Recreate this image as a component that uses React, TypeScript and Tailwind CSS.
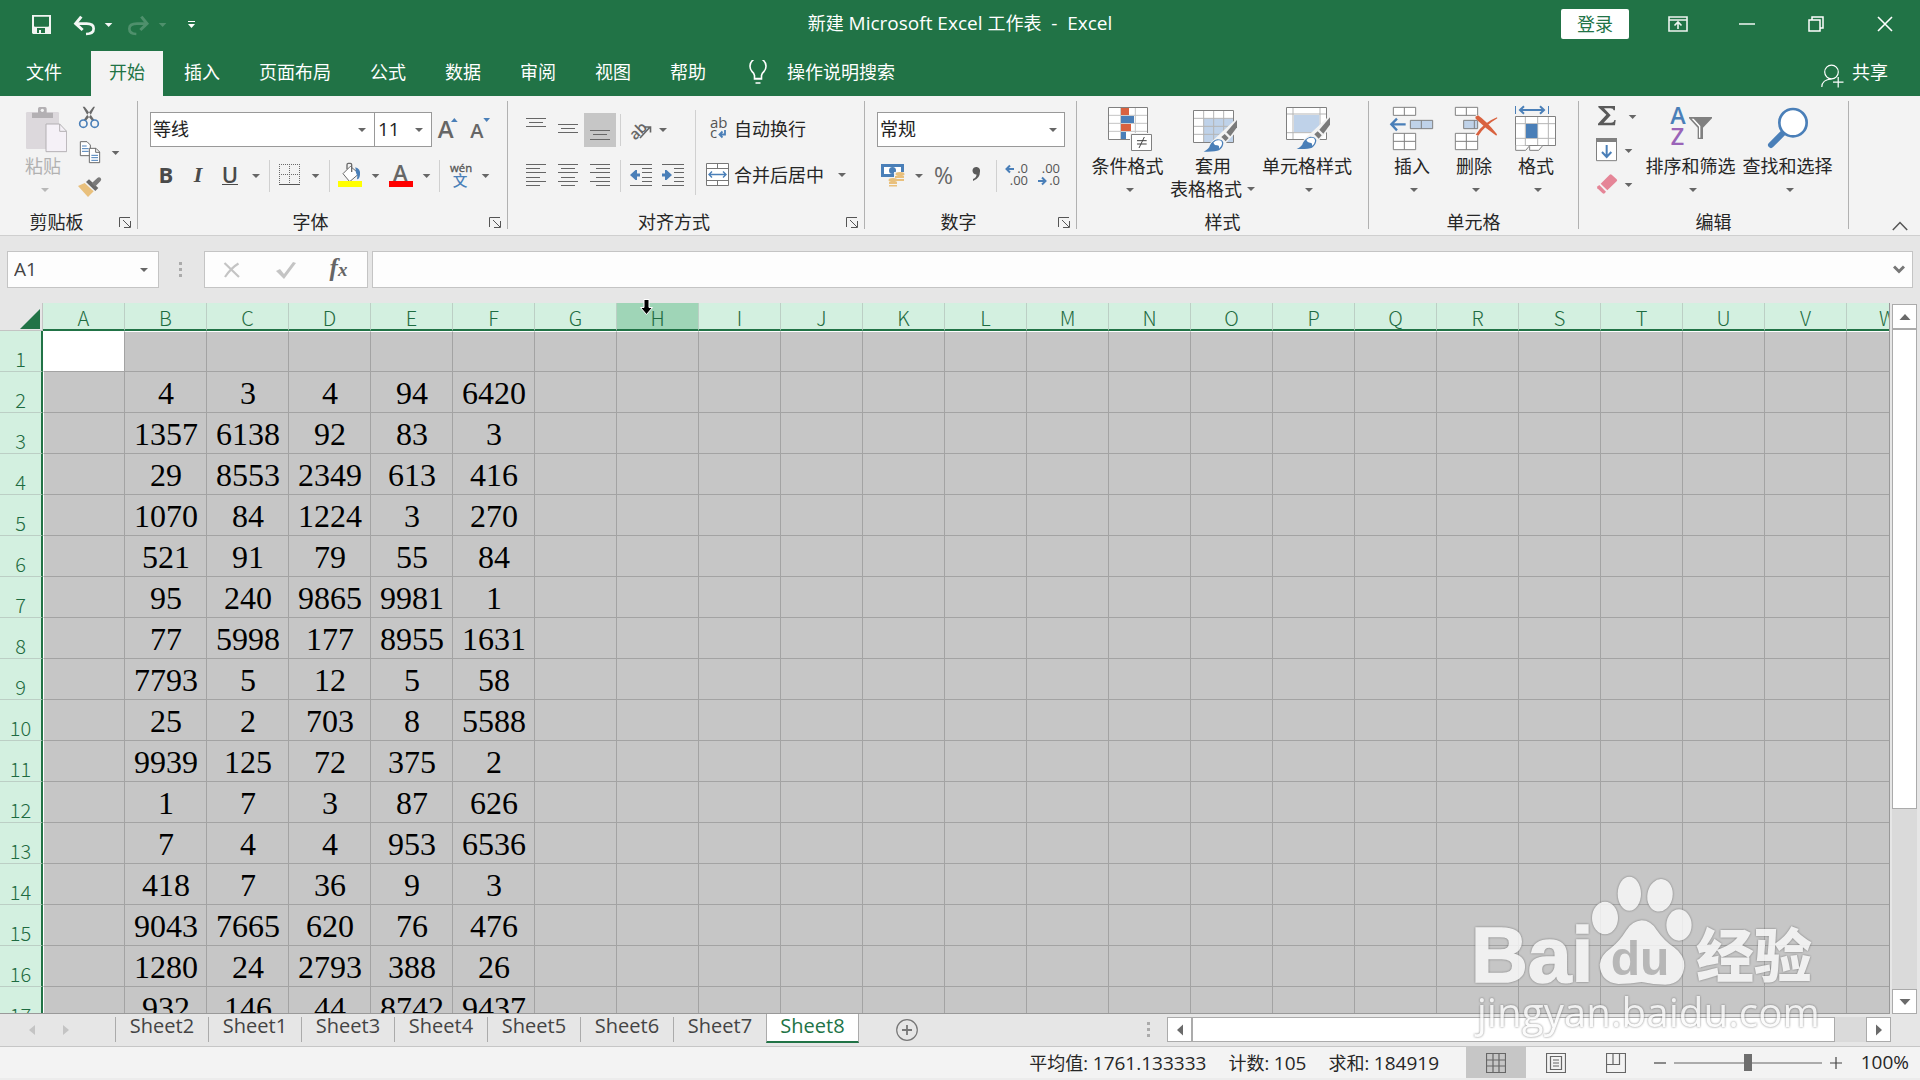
import React from "react";

type Kids = { children?: React.ReactNode };

const UNITS = 3;

/* Icon whose drawing units are a third of a pixel. */
function Fine({ x, y, w, h, children }: { x: number; y: number; w: number; h: number } & Kids) {
  return (
    <svg width={w} height={h} viewBox={`${x} ${y} ${w * UNITS} ${h * UNITS}`} className="block shrink-0" aria-hidden="true">
      {children}
    </svg>
  );
}

function Pix({ x, y, w, h, children }: { x: number; y: number; w: number; h: number } & Kids) {
  return (
    <svg width={w} height={h} viewBox={`${x} ${y} ${w} ${h}`} className="block shrink-0" aria-hidden="true">
      {children}
    </svg>
  );
}

function Caret({ color = "#666" }: { color?: string }) {
  return (
    <svg width="8" height="4" viewBox="0 0 8 4" className="block shrink-0" aria-hidden="true">
      <path d="M0 0h8L4 4z" fill={color} />
    </svg>
  );
}

function IconButton({ label, className = "", children }: { label: string; className?: string } & Kids) {
  return (
    <button type="button" aria-label={label} className={`flex shrink-0 items-center justify-center ${className}`}>
      {children}
    </button>
  );
}

function Sep() {
  return <div className="h-8 w-px shrink-0 bg-[#d0d0d0]" />;
}

function Group({ label, launcher, className, children }: { label: string; launcher?: boolean; className: string } & Kids) {
  return (
    <section aria-label={label} className={`flex h-32 shrink-0 flex-col border-r border-[#b1b1b1] ${className}`}>
      <div className="flex h-[114px]">{children}</div>
      <div className="flex h-[14px] items-center">
        <div className="flex-1 text-center leading-[14px]">{label}</div>
        {launcher && (
          <IconButton label={`${label}设置`} className="w-6">
            <Pix x={0} y={0} w={12} h={12}>
              <path d="M.5 11V1.500H11M4 4l7 7M11.500 5v6.500H5" fill="none" stroke="#555" />
            </Pix>
          </IconButton>
        )}
      </div>
    </section>
  );
}

function BigButton({ icon, lines, disabled, inlineCaret, className }: { icon: React.ReactNode; lines: string[]; disabled?: boolean; inlineCaret?: boolean; className: string }) {
  return (
    <button type="button" disabled={disabled} className={`flex shrink-0 flex-col items-center pt-1 whitespace-nowrap ${disabled ? "text-[#b1b1b1]" : ""} ${className}`}>
      {icon}
      <span className="mt-px leading-6">{lines[0]}</span>
      {inlineCaret ? (
        <span className="flex items-center gap-[5px] self-start leading-[22px]">
          {lines[1]}
          <Caret />
        </span>
      ) : (
        <span className="mt-[10px] ml-1">
          <Caret color={disabled ? "#b8b8b8" : "#666"} />
        </span>
      )}
    </button>
  );
}

/* ---------- title bar ---------- */

function TitleBar() {
  return (
    <header className="flex h-[51px] items-start">
      <div className="flex h-12 flex-1 items-center">
        <IconButton label="保存" className="ml-6 w-9">
          <Fine x={90} y={36} w={24} h={24}>
            <path fillRule="evenodd" fill="#f1f5f2" d="M96 45h57v57H99l-3-3zM102 50v27q0 3 3 3h39q3 0 3-3V50zM111 84v15h6v-9h6v9h12V84z" />
          </Fine>
        </IconButton>
        <IconButton label="撤消" className="ml-[7px] w-[52px]">
          <Fine x={210} y={33} w={46} h={27}>
            <path d="M230 71H260Q281 71 281 86Q281 101 258 102" fill="none" stroke="#f4f7f5" strokeWidth="8" />
            <path d="M244 50L227 71L248 90" fill="none" stroke="#f4f7f5" strokeWidth="9" />
            <path d="M314 69h23l-11 12z" fill="#f4f7f5" />
          </Fine>
        </IconButton>
        <IconButton label="恢复" className="w-[54px]">
          <Fine x={363} y={33} w={48} h={27}>
            <path d="M434 71H408Q385 71 385 86Q385 101 406 102" fill="none" stroke="#4f906c" strokeWidth="8" />
            <path d="M421 50L438 71L418 90" fill="none" stroke="#4f906c" strokeWidth="9" />
            <path d="M473 69h23l-11 12z" fill="#4f906c" />
          </Fine>
        </IconButton>
        <IconButton label="自定义快速访问工具栏" className="ml-1 w-7">
          <Pix x={0} y={0} w={8} h={8}>
            <path d="M1 1h7v1H1zM1 4h7L4.500 8z" fill="#fff" />
          </Pix>
        </IconButton>
      </div>
      <h1 className="flex h-[47px] items-center whitespace-pre text-white">
        新建<span className="text-[19px]"> Microsoft Excel </span>工作表<span className="text-[19px]">  -  Excel</span>
      </h1>
      <div className="flex h-12 flex-1 items-center justify-end pb-px">
        <button type="button" className="mr-[14px] h-[30px] w-[68px] rounded-[2px] bg-white leading-[30px] text-[#217346]">登录</button>
        <IconButton label="功能区显示选项" className="h-12 w-[69px]">
          <Pix x={0} y={0} w={20} h={16}>
            <path d="M1 1h18v14H1zM1 4h18M10 13V7M6.500 9.500L10 6l3.500 3.500" fill="none" stroke="#eef4f0" strokeWidth="1.600" />
          </Pix>
        </IconButton>
        <IconButton label="最小化" className="h-12 w-[69px]">
          <Pix x={0} y={0} w={16} h={2}>
            <path d="M0 1h16" stroke="#fff" strokeWidth="1.400" />
          </Pix>
        </IconButton>
        <IconButton label="向下还原" className="h-12 w-[69px]">
          <Pix x={0} y={0} w={16} h={16}>
            <path d="M1 4h11v11H1zM4 4V1h11v11h-3" fill="none" stroke="#fff" strokeWidth="1.500" />
          </Pix>
        </IconButton>
        <IconButton label="关闭" className="mr-px h-12 w-[69px]">
          <Pix x={0} y={0} w={16} h={16}>
            <path d="M1 1l14 14M15 1L1 15" fill="none" stroke="#fff" strokeWidth="1.600" />
          </Pix>
        </IconButton>
      </div>
    </header>
  );
}

const MENU = ["插入", "页面布局", "公式", "数据", "审阅", "视图", "帮助"];

function MenuTabs() {
  return (
    <nav className="flex h-[45px] items-stretch gap-[3px] text-white">
      <button type="button" className="w-[88px] pb-[2px] pl-[26px] text-left">文件</button>
      <button type="button" className="bg-[#f3f3f3] px-[18px] pb-[2px] text-[#217346]">开始</button>
      {MENU.map((m) => (
        <button type="button" key={m} className="px-[18px] pb-[2px]">
          {m}
        </button>
      ))}
      <button type="button" className="ml-[22px] flex items-center gap-5 pb-[2px]">
        <Pix x={0} y={0} w={18} h={25}>
          <path d="M5.500 19v-3.500Q5 13 3 11.500A8 8 0 1 1 15 11.500Q13 13 12.500 15.500V19zM5.500 18.500h7M6.500 23h5" fill="none" stroke="#fff" strokeWidth="1.600" />
        </Pix>
        操作说明搜索
      </button>
      <button type="button" className="mr-[32px] ml-auto flex items-center gap-2 pb-[2px]">
        <span className="pt-[6px]">
          <Pix x={0} y={0} w={23} h={24}>
            <circle cx="10.500" cy="8" r="6.800" fill="none" stroke="#fff" strokeWidth="1.200" />
            <path d="M.8 23Q1 15.500 10.500 15M12 18.200h10.500M17.200 13v10.500" fill="none" stroke="#fff" strokeWidth="1.200" />
          </Pix>
        </span>
        共享
      </button>
    </nav>
  );
}

/* ---------- ribbon ---------- */

function ClipboardGroup() {
  return (
    <Group label="剪贴板" launcher className="w-[138px]">
      <BigButton
        disabled
        className="ml-[19px] w-12"
        lines={["粘贴"]}
        icon={
          <Fine x={57} y={315} w={48} h={48}>
            <rect x="78" y="336" width="99" height="111" rx="4" fill="#dcd8dc" />
            <path d="M96 354v-16h18v-12q0-5 5-5h16q5 0 5 5v12h19v16z" fill="#b3b0b3" />
            <circle cx="127" cy="331" r="5" fill="#f3f3f3" />
            <path d="M138 372h41l21 22v61h-62z" fill="#f5f1f7" stroke="#b3b0b3" strokeWidth="3" />
            <path d="M179 372v22h21" fill="none" stroke="#b3b0b3" strokeWidth="3" />
          </Fine>
        }
      />
      <div className="ml-[11px] flex flex-col">
        <IconButton label="剪切">
          <Fine x={234} y={303} w={44} h={34}>
            <path d="M248 320L262 345L276 362L283 360L268 338L254 320zM285 320L272 345L258 362L251 360L265 340L280 320z" fill="#6a6a6a" />
            <circle cx="250" cy="371" r="11" fill="none" stroke="#4a7fb8" strokeWidth="5" />
            <circle cx="284" cy="371" r="11" fill="none" stroke="#4a7fb8" strokeWidth="5" />
          </Fine>
        </IconButton>
        <IconButton label="复制">
          <Fine x={234} y={405} w={44} h={34}>
            <path d="M241 425h20l10 10v32h-30z" fill="#fff" stroke="#6a6a6a" strokeWidth="3" />
            <path d="M246 438h14M246 446h20M246 454h20" stroke="#4a7fb8" strokeWidth="3" />
            <path d="M268 445h20l11 11v32h-31z" fill="#fff" stroke="#6a6a6a" strokeWidth="3" />
            <path d="M287 445v12h12" fill="none" stroke="#6a6a6a" strokeWidth="3" />
            <path d="M274 466h20M274 473h20M274 481h20" stroke="#4a7fb8" strokeWidth="3" />
            <path d="M335 453h23l-11 12z" fill="#666" />
          </Fine>
        </IconButton>
        <IconButton label="格式刷">
          <Fine x={234} y={507} w={44} h={34}>
            <path d="M234 558L254 549L281 574L264 591z" fill="#e9c07c" />
            <path d="M258 546l9-8l28 26l-9 9z" fill="#6a6a6a" />
            <path d="M275 550l17-16q5-5 10 0q4 5-1 10l-16 16z" fill="#7a7a7a" />
          </Fine>
        </IconButton>
      </div>
    </Group>
  );
}

function FontGroup() {
  return (
    <Group label="字体" launcher className="w-[370px]">
      <div className="flex flex-col gap-[11px] pt-[11px] pl-3">
        <div className="flex h-[35px] items-stretch">
          <div className="flex w-[225px] items-center border border-[#999] bg-white pr-2">
            <input aria-label="字体名称" defaultValue="等线" className="min-w-0 flex-1 pl-[2px] text-[#222] outline-none" />
            <Caret />
          </div>
          <div className="-ml-px flex w-[58px] items-center border border-[#999] bg-white pr-2">
            <input aria-label="字号" defaultValue="11" className="min-w-0 flex-1 pl-[3px] text-[19px] text-[#222] outline-none" />
            <Caret />
          </div>
          <IconButton label="增大字号" className="ml-1">
            <Fine x={1308} y={336} w={28} h={35}>
              <text x="1313" y="414" fontSize="72" fontWeight="600" fill="#666">A</text>
              <path d="M1353 366h20l-10-12z" fill="#4a7fb8" />
            </Fine>
          </IconButton>
          <IconButton label="减小字号" className="ml-1">
            <Fine x={1404} y={336} w={28} h={35}>
              <text x="1411" y="414" fontSize="60" fontWeight="600" fill="#666">A</text>
              <path d="M1450 354h20l-10 12z" fill="#4a7fb8" />
            </Fine>
          </IconButton>
        </div>
        <div className="flex h-9 items-center text-[22px] text-[#4a4a4a]">
          <IconButton label="加粗" className="h-9 w-8 pb-1 font-bold">B</IconButton>
          <IconButton label="倾斜" className="h-9 w-8 pb-1 font-bold italic [font-family:'Liberation_Serif',serif]">I</IconButton>
          <IconButton label="下划线" className="h-9 w-8 pb-1 font-semibold">
            <span className="border-b border-[#4a4a4a] leading-[20px]">U</span>
          </IconButton>
          <IconButton label="下划线选项" className="mr-[3px] w-5">
            <Caret />
          </IconButton>
          <Sep />
          <IconButton label="边框" className="ml-2">
            <Fine x={834} y={474} w={51} h={36}>
              <path d="M837 493.500H900M837 523.500H900" stroke="#6a6a6a" strokeWidth="3" strokeDasharray="3 3" />
              <path d="M838.500 492V552M868.500 492V552M898.500 492V552" stroke="#6a6a6a" strokeWidth="3" strokeDasharray="3 3" />
              <path d="M837 553.500H900" stroke="#555" strokeWidth="3" />
              <path d="M935 522h23l-11 12z" fill="#666" />
            </Fine>
          </IconButton>
          <Sep />
          <IconButton label="填充颜色" className="ml-[7px]">
            <Fine x={1011} y={474} w={51} h={36}>
              <path d="M1029 521l22-22l26 22l-28 24z" fill="#fff" stroke="#6a6a6a" strokeWidth="3" />
              <path d="M1041 508v-14q0-4 4-4h6q4 0 4 4v22" fill="none" stroke="#6a6a6a" strokeWidth="4" />
              <path d="M1066 502q16 4 14 22q-1 12-9 14q3-12-3-20z" fill="#4a7fb8" />
              <path d="M1014 543h72v18h-72z" fill="#ff0" />
              <path d="M1115 522h23l-11 12z" fill="#666" />
            </Fine>
          </IconButton>
          <IconButton label="字体颜色">
            <Fine x={1164} y={474} w={46} h={36}>
              <text x="1179" y="543" fontSize="66" fontWeight="600" fill="#666">A</text>
              <path d="M1167 543h72v18h-72z" fill="#f00" />
              <path d="M1268 522h23l-11 12z" fill="#666" />
            </Fine>
          </IconButton>
          <div className="ml-[5px]">
            <Sep />
          </div>
          <IconButton label="拼音指南" className="ml-2">
            <Fine x={1347} y={474} w={48} h={36}>
              <text x="1353" y="515" fontSize="34" fill="#555" stroke="#555">wén</text>
              <text x="1361" y="557" fontSize="44" fontWeight="500" fill="#4a7fb8">文</text>
              <path d="M1448 522h23l-11 12z" fill="#666" />
            </Fine>
          </IconButton>
        </div>
      </div>
    </Group>
  );
}

function Lines({ rows }: { rows: [number, number][] }) {
  return (
    <>
      {rows.map(([y, len], i) => (
        <path key={i} d={`M${(20 - len) / 2} ${y + 0.5}h${len}`} stroke="#666" />
      ))}
    </>
  );
}

const TEXT_ROWS = [164, 168, 172, 177, 181, 185];

function AlignGroup() {
  return (
    <Group label="对齐方式" launcher className="w-[357px]">
      <div className="flex flex-col gap-[11px] pt-3 pl-3">
        <div className="flex h-[34px] items-stretch">
          <IconButton label="顶端对齐" className="w-8">
            <Pix x={0} y={113} w={20} h={34}><Lines rows={[[118, 20], [122, 14], [126, 20]]} /></Pix>
          </IconButton>
          <IconButton label="垂直居中" className="w-8">
            <Pix x={0} y={113} w={20} h={34}><Lines rows={[[124, 20], [128, 14], [132, 20]]} /></Pix>
          </IconButton>
          <IconButton label="底端对齐" className="w-8 bg-[#c6c6c6]">
            <Pix x={0} y={113} w={20} h={34}><Lines rows={[[130, 20], [134, 14], [139, 20]]} /></Pix>
          </IconButton>
          <div className="ml-1 self-center"><Sep /></div>
          <IconButton label="方向" className="ml-[5px]">
            <Pix x={626} y={113} w={46} h={34}>
              <text x="630" y="138" fontSize="15" fontWeight="600" fill="#666" transform="rotate(-45 636 133)">ab</text>
              <path d="M640 138L650 127M645 127h5.500v5.500" fill="none" stroke="#666" strokeWidth="1.600" />
              <path d="M659 128h8l-4 4z" fill="#666" />
            </Pix>
          </IconButton>
        </div>
        <div className="flex h-9 items-center">
          {(["左对齐", "居中", "右对齐"] as const).map((n, i) => (
            <IconButton key={n} label={n} className="w-8">
              <Pix x={0} y={158} w={20} h={36}>
                {TEXT_ROWS.map((y, r) => {
                  const len = r % 2 ? 14 : 20;
                  const start = i === 0 ? 0 : i === 1 ? (20 - len) / 2 : 20 - len;
                  return <path key={y} d={`M${start} ${y + 0.5}h${len}`} stroke="#666" />;
                })}
              </Pix>
            </IconButton>
          ))}
          <div className="mr-1 ml-1"><Sep /></div>
          {(["减少缩进量", "增加缩进量"] as const).map((n, i) => (
            <IconButton key={n} label={n} className="w-8">
              <Pix x={0} y={158} w={22} h={36}>
                <path d="M0 164.500h22M0 185.500h22M12 168.500h10M12 172.500h10M12 177.500h10M12 181.500h10" stroke="#666" />
                <path
                  d={i === 0 ? "M0 175l5.500-5h1.500v3.500h3v3h-3v3.500H5.500z" : "M10 175l-5.500-5H3v3.500H0v3h3v3.500h1.500z"}
                  fill="#4a7fb8"
                />
              </Pix>
            </IconButton>
          ))}
        </div>
      </div>
      <div className="mt-[9px] ml-[6px] h-[85px] w-px bg-[#d0d0d0]" />
      <div className="flex flex-col items-start gap-[11px] pt-[11px] pl-[10px]">
        <button type="button" className="flex h-[34px] items-center gap-1">
          <Pix x={706} y={113} w={24} h={34}>
            <text x="710" y="129" fontSize="15" fill="#555">ab</text>
            <text x="710" y="139" fontSize="15" fill="#555">c</text>
            <path d="M725 131v4.500h-5M722.500 132.500l-3 3l3 3" fill="none" stroke="#4a7fb8" strokeWidth="1.800" />
          </Pix>
          自动换行
        </button>
        <button type="button" className="flex h-9 items-center gap-1">
          <Pix x={706} y={157} w={24} h={36}>
            <path d="M706.500 163.500h22v22h-22zM706.500 168.500h22M706.500 180.500h22M717.500 163.500v5M717.500 180.500v5" fill="#fff" stroke="#777" />
            <path d="M709 174.500h17M712 171.500l-3 3l3 3M723 171.500l3 3l-3 3" fill="none" stroke="#4a7fb8" strokeWidth="1.400" />
          </Pix>
          合并后居中
          <span className="ml-[10px]"><Caret /></span>
        </button>
      </div>
    </Group>
  );
}

function NumberGroup() {
  return (
    <Group label="数字" launcher className="w-[212px]">
      <div className="flex flex-col gap-[11px] pt-[11px] pl-3">
        <div className="flex h-[35px] w-[188px] items-center border border-[#999] bg-white">
          <select aria-label="数字格式" defaultValue="常规" className="h-full w-full appearance-none pl-[2px] text-[#222] outline-none">
            <option>常规</option>
            <option>数值</option>
          </select>
          <span className="pointer-events-none -ml-[15px]"><Caret /></span>
        </div>
        <div className="flex h-9 items-center">
          <IconButton label="会计数字格式">
            <Pix x={877} y={158} w={50} h={36}>
              <path d="M881 164h23v13h-23z" fill="#4a7fb8" />
              <path d="M884 167h17v7h-17z" fill="#fff" />
              <circle cx="892.500" cy="170.500" r="3.500" fill="#4a7fb8" />
              <path d="M894 172h11v10h-11z" fill="#f3f3f3" />
              <ellipse cx="900" cy="174" rx="4.500" ry="2" fill="#e9c07c" />
              <path d="M895 176h9v2h-9zM895 179h9v2h-9z" fill="#e9c07c" />
              <path d="M888 178h9v9h-9z" fill="#f3f3f3" />
              <ellipse cx="893" cy="180" rx="4.500" ry="2" fill="#e9c07c" />
              <path d="M889 182h8v2h-8zM889 185h8v1.500h-8z" fill="#e9c07c" />
              <path d="M915 174h8l-4 4z" fill="#666" />
            </Pix>
          </IconButton>
          <IconButton label="百分比样式" className="h-9 w-[33px] pb-[2px] text-[23px] text-[#666]">%</IconButton>
          <IconButton label="千位分隔样式" className="mr-1 w-8">
            <Pix x={966} y={158} w={20} h={36}>
              <path d="M980 171.500q0 7-7 9.500v-2q3.500-1.500 3.500-4.500a3.800 3.800 0 1 1 3.500-3z" fill="#5a5a5a" />
            </Pix>
          </IconButton>
          <Sep />
          <IconButton label="增加小数位数" className="ml-1 w-8">
            <Pix x={1005} y={158} w={24} h={36}>
              <text x="1028" y="173" fontSize="13" textAnchor="end" fill="#555">.0</text>
              <text x="1028" y="185" fontSize="13" textAnchor="end" fill="#555">.00</text>
              <path d="M1014 169h-7M1010 165.500l-3.500 3.500l3.500 3.500" fill="none" stroke="#4a7fb8" strokeWidth="2" />
            </Pix>
          </IconButton>
          <IconButton label="减少小数位数" className="w-8">
            <Pix x={1037} y={158} w={24} h={36}>
              <text x="1060" y="173" fontSize="13" textAnchor="end" fill="#555">.00</text>
              <text x="1060" y="185" fontSize="13" textAnchor="end" fill="#555">.0</text>
              <path d="M1038 181h7M1042 177.500l3.500 3.500l-3.500 3.500" fill="none" stroke="#4a7fb8" strokeWidth="2" />
            </Pix>
          </IconButton>
        </div>
      </div>
    </Group>
  );
}

function Brush({ dx = 0, dy = 0 }: { dx?: number; dy?: number }) {
  return (
    <g transform={`translate(${dx} ${dy})`}>
      <path d="M404 187L424 158L446 138L504 84V124L470 160L455 182z" fill="#f3f3f3" />
      <path d="M404 185Q420 178 423 166Q430 152 445 148Q460 148 463 158Q463 172 450 181Q440 186 404 185z" fill="#4a7fb8" />
      <path d="M433 158Q440 150 450 151Q460 152 459 162Q458 170 450 176Q452 166 444 166Q436 166 433 158z" fill="#fff" />
      <path d="M457 141l10-9l12 12l-9 10z" fill="#7a7a7a" />
      <path d="M472 127L504 90V112L484 139z" fill="#7a7a7a" />
    </g>
  );
}

function StyleGroup() {
  return (
    <Group label="样式" className="w-[292px]">
      <div className="flex gap-[6px] pl-[14px]">
        <BigButton
          className="w-[73px]"
          lines={["条件格式"]}
          icon={
            <Fine x={102} y={45} w={48} h={48}>
              <path d="M115 52h118v97H115z" fill="#fff" />
              <path d="M115 76h118M115 100h118M115 124h118M152 52v97M196 52v97" stroke="#c4c4c4" strokeWidth="3" />
              <path d="M115.500 52.500h117v96h-117z" fill="none" stroke="#808080" strokeWidth="3" />
              <path d="M153 54h24v21h-24zM153 102h30v21h-30z" fill="#d9623f" />
              <path d="M153 78h39v21h-39zM153 126h15v21h-15z" fill="#4a7fb8" />
              <path d="M180 129h66v57h-66z" fill="#f3f3f3" />
              <path d="M184.500 133.500h60v48h-60z" fill="#fff" stroke="#808080" strokeWidth="3" />
              <path d="M201 152h29M201 162h29M223 141L207 174" stroke="#444" strokeWidth="3" />
            </Fine>
          }
        />
        <BigButton
          className="w-[86px]"
          inlineCaret
          lines={["套用", "表格格式"]}
          icon={
            <Fine x={360} y={45} w={48} h={48}>
              <path d="M373 61h121v96H373z" fill="#fff" />
              <path d="M404 85h90v72h-90z" fill="#bfd2e9" />
              <path d="M373 85h121M373 109h121M373 133h121M404 61v96M434 61v96M464 61v96" stroke="#b5b5b5" strokeWidth="3" />
              <path d="M373.500 61.500h120v96h-120z" fill="none" stroke="#808080" strokeWidth="3" />
              <Brush />
            </Fine>
          }
        />
        <BigButton
          className="w-[90px]"
          lines={["单元格样式"]}
          icon={
            <Fine x={642} y={45} w={48} h={48}>
              <path d="M652 52h121v97H652z" fill="#fff" />
              <path d="M652 72h121M652 128h121M672 52v97M753 52v97" stroke="#b5b5b5" strokeWidth="3" />
              <path d="M675 75h76v51h-76z" fill="#bfd2e9" />
              <path d="M652.500 52.500h120v96h-120z" fill="none" stroke="#808080" strokeWidth="3" />
              <Brush dx={279} dy={-8} />
            </Fine>
          }
        />
      </div>
    </Group>
  );
}

function CellsGroup() {
  return (
    <Group label="单元格" className="w-[210px]">
      <div className="flex gap-[14px] pl-[19px]">
        <BigButton
          className="w-12"
          lines={["插入"]}
          icon={
            <Fine x={954} y={45} w={48} h={48}>
              <g stroke="#808080" strokeWidth="3" fill="#fff">
                <path d="M970 52h67v24h-67zM1003 52v24" />
                <path d="M970 130h67v49h-67zM970 154h67M1003 130v49" />
                <path d="M1021 91h67v25h-67zM1054 91v25" fill="#bfd2e9" />
              </g>
              <path d="M1007 103H966M981 86L964 103L981 121" fill="none" stroke="#4a7fb8" strokeWidth="7" />
            </Fine>
          }
        />
        <BigButton
          className="w-12"
          lines={["删除"]}
          icon={
            <Fine x={1140} y={45} w={48} h={48}>
              <g stroke="#808080" strokeWidth="3" fill="#fff">
                <path d="M1156 52h67v24h-67zM1189 52v24" />
                <path d="M1156 130h67v49h-67zM1156 154h67M1189 130v49" />
                <path d="M1181 91h42v25h-42zM1213 91v25" fill="#bfd2e9" />
              </g>
              <path d="M1216 80Q1238 88 1280 134M1282 84Q1248 98 1219 134" fill="none" stroke="#f3f3f3" strokeWidth="14" />
              <path d="M1216 80l8-4Q1248 92 1281 133l-2 4Q1248 116 1217 86zM1281 82l1 3Q1246 106 1225 137l-8-3Q1240 98 1281 82z" fill="#d9623f" />
            </Fine>
          }
        />
        <BigButton
          className="w-12"
          lines={["格式"]}
          icon={
            <Fine x={1326} y={45} w={48} h={48}>
              <path d="M1336.500 48v24M1435.500 48v24" stroke="#4a7fb8" strokeWidth="3" />
              <path d="M1350 60H1422M1362 49L1350 60L1362 71M1410 49L1422 60L1410 71" fill="none" stroke="#4a7fb8" strokeWidth="6" />
              <path d="M1337 80h120v86h-120z" fill="#fff" />
              <path d="M1337 101h120M1337 145h120M1366 80v86M1403 80v86M1435 80v86" stroke="#b5b5b5" strokeWidth="3" />
              <path d="M1336.500 79.500h120v87h-120z" fill="none" stroke="#808080" strokeWidth="3" />
              <path d="M1368 102h34v42h-34z" fill="#4a7fb8" />
              <path d="M1337 166v15h30l12-14M1379 169v12h27l12-14" fill="#fff" stroke="#808080" strokeWidth="3" />
            </Fine>
          }
        />
      </div>
    </Group>
  );
}

function EditGroup() {
  return (
    <Group label="编辑" className="w-[270px]">
      <div className="ml-[15px] flex flex-col">
        <IconButton label="自动求和">
          <Fine x={162} y={303} w={46} h={34}>
            <path d="M175 318h50v13h-4q-1-6-9-6h-20l20 21l-21 22h22q9 0 10-8h4l-2 16h-51v-5l25-27l-24-22z" fill="#5a5a5a" />
            <path d="M266 345h23l-11 12z" fill="#666" />
          </Fine>
        </IconButton>
        <IconButton label="填充">
          <Fine x={162} y={405} w={46} h={34}>
            <path d="M169.500 416h60v66h-60z" fill="#fff" stroke="#808080" strokeWidth="3" />
            <path d="M168 414h63v12h-63z" fill="#808080" />
            <path d="M200 435v35M186 456l14 15l14-15" fill="none" stroke="#4a7fb8" strokeWidth="6" />
            <path d="M254 447h23l-11 12z" fill="#666" />
          </Fine>
        </IconButton>
        <IconButton label="清除">
          <Fine x={162} y={507} w={46} h={34}>
            <path d="M182 551l27-27q3-3 6 0l15 14q3 3 0 6l-28 27z" fill="#e58597" />
            <path d="M178 555l20 20l-4 5q-3 2-6 0l-16-15q-2-3 1-6z" fill="#e58597" />
            <path d="M254 549h23l-11 12z" fill="#666" />
          </Fine>
        </IconButton>
      </div>
      <div className="ml-[5px] flex gap-[6px]">
        <BigButton
          className="w-[91px]"
          lines={["排序和筛选"]}
          icon={
            <Fine x={381} y={315} w={48} h={48}>
              <text x="391" y="372" fontSize="70" fontWeight="600" fill="#4a7fb8">A</text>
              <text x="392" y="434" fontSize="70" fontWeight="600" fill="#9a64b8">Z</text>
              <path d="M447 351h69v4l-27 28v34h-16v-34L447 355z" fill="#808080" />
              <path d="M455 356l22 24v33h4v-35l-20-22z" fill="#fff" />
            </Fine>
          }
        />
        <BigButton
          className="w-[91px]"
          lines={["查找和选择"]}
          icon={
            <Fine x={672} y={315} w={48} h={48}>
              <path d="M732 396L693 435" stroke="#4a7fb8" strokeWidth="18" strokeLinecap="round" />
              <circle cx="759" cy="368" r="41" fill="#fff" stroke="#4a7fb8" strokeWidth="8" />
            </Fine>
          }
        />
      </div>
    </Group>
  );
}

function Ribbon() {
  return (
    <div className="flex h-[140px] shrink-0 overflow-hidden border-b border-[#cfcfcf] bg-[#f3f3f3] pt-[5px] text-[#262626]">
      <ClipboardGroup />
      <FontGroup />
      <AlignGroup />
      <NumberGroup />
      <StyleGroup />
      <CellsGroup />
      <EditGroup />
      <IconButton label="折叠功能区" className="mr-3 mb-1 ml-auto self-end">
        <Pix x={0} y={0} w={16} h={10}>
          <path d="M.8 9L8 1.500L15.200 9" fill="none" stroke="#555" strokeWidth="1.500" />
        </Pix>
      </IconButton>
    </div>
  );
}

/* ---------- formula bar ---------- */

function Dots() {
  return (
    <div className="flex flex-col gap-[3px]">
      <i className="block size-[3px] bg-[#ababab]" />
      <i className="block size-[3px] bg-[#ababab]" />
      <i className="block size-[3px] bg-[#ababab]" />
    </div>
  );
}

function FormulaBar() {
  return (
    <div className="flex h-[67px] shrink-0 items-start pt-[15px] pr-[7px] pl-[7px]">
      <div className="flex h-[37px] w-[152px] items-center border border-[#c4c4c4] bg-[#fdfdfd] pr-[10px]">
        <input aria-label="名称框" defaultValue="A1" className="min-w-0 flex-1 pl-[6px] text-[19px] text-[#444] outline-none" />
        <Caret />
      </div>
      <div className="flex h-[36px] w-[45px] items-center justify-center pr-[2px]"><Dots /></div>
      <div className="flex h-[37px] w-[164px] items-center border border-[#c4c4c4] bg-[#fdfdfd]">
        <IconButton label="取消" className="w-[54px]">
          <Pix x={0} y={0} w={18} h={16}>
            <path d="M1.500 1L16 15M15.500 1.500Q8 6 2 15" fill="none" stroke="#c4c4c4" strokeWidth="2.200" />
          </Pix>
        </IconButton>
        <IconButton label="输入" className="w-[53px]">
          <Pix x={0} y={0} w={20} h={18}>
            <path d="M0 10l4-2l4 5L17 1l3 1L8 18z" fill="#c4c4c4" />
          </Pix>
        </IconButton>
        <IconButton label="插入函数" className="w-[53px] pb-1 text-[25px] leading-none text-[#666] italic [font-family:'Liberation_Serif',serif]">
          <b className="font-bold">f</b>
          <b className="pt-1 text-[19px] font-bold">x</b>
        </IconButton>
      </div>
      <div className="ml-1 flex h-[37px] flex-1 items-center border border-[#c4c4c4] bg-[#fdfdfd] pr-[7px]">
        <input aria-label="编辑栏" className="min-w-0 flex-1 px-2 outline-none" />
        <IconButton label="展开编辑栏">
          <Pix x={0} y={0} w={12} h={9}>
            <path d="M1 1.500L6 6.500L11 1.500" fill="none" stroke="#777" strokeWidth="3" />
          </Pix>
        </IconButton>
      </div>
    </div>
  );
}

/* ---------- grid ---------- */

const COLS = "ABCDEFGHIJKLMNOPQRSTUVW".split("");
const DATA: number[][] = [
  [],
  [4, 3, 4, 94, 6420],
  [1357, 6138, 92, 83, 3],
  [29, 8553, 2349, 613, 416],
  [1070, 84, 1224, 3, 270],
  [521, 91, 79, 55, 84],
  [95, 240, 9865, 9981, 1],
  [77, 5998, 177, 8955, 1631],
  [7793, 5, 12, 5, 58],
  [25, 2, 703, 8, 5588],
  [9939, 125, 72, 375, 2],
  [1, 7, 3, 87, 626],
  [7, 4, 4, 953, 6536],
  [418, 7, 36, 9, 3],
  [9043, 7665, 620, 76, 476],
  [1280, 24, 2793, 388, 26],
  [932, 146, 44, 8742, 9437],
];

function Grid() {
  return (
    <div className="min-w-0 flex-1 overflow-hidden border-r border-b border-[#999] bg-[#c6c6c6]">
      <table className="w-[1929px] table-fixed border-separate border-spacing-0">
        <colgroup>
          <col className="w-[43px]" />
          {COLS.map((c) => (
            <col key={c} className="w-[82px]" />
          ))}
        </colgroup>
        <thead>
          <tr className="h-7 text-[20px] leading-[22px] text-[#1e6b41] [font-family:'Noto_Sans_CJK_SC',sans-serif]">
            <th className="border-r border-b border-[#c4c4c4] bg-[#e6e6e6] p-0">
              <button type="button" aria-label="全选" className="ml-auto block pt-1 pr-[2px]">
                <Pix x={0} y={0} w={20} h={20}>
                  <path d="M20 0v20H0z" fill="#217346" />
                </Pix>
              </button>
            </th>
            {COLS.map((c) => (
              <th
                key={c}
                scope="col"
                className={`border-r border-b-2 border-r-[#bccfc5] border-b-[#217346] p-0 pt-1 font-light ${c === "H" ? "bg-[#9fd5b7]" : "bg-[#d3f0e0]"}`}
              >
                {c}
              </th>
            ))}
          </tr>
        </thead>
        <tbody>
          {DATA.map((row, r) => (
            <tr key={r} className="h-[41px]">
              <th
                scope="row"
                className="border-r-2 border-b border-r-[#217346] border-b-[#bccfc5] bg-[#d3f0e0] p-0 align-bottom text-[20px] leading-6 font-light text-[#1e6b41] [font-family:'Noto_Sans_CJK_SC',sans-serif]"
              >
                {r + 1}
              </th>
              {COLS.map((c, i) => (
                <td
                  key={c}
                  className={`border-r border-b border-r-[#a3a3a3] border-b-[#a3a3a3] p-0 pt-[2px] pl-px text-center text-[32px] leading-9 text-black [font-family:'Liberation_Serif',serif] ${i === 0 ? "border-l border-l-white" : ""} ${r === 0 ? "border-t border-t-white" : ""} ${r === 0 && i === 0 ? "bg-white" : ""}`}
                >
                  {i > 0 ? row[i - 1] : null}
                </td>
              ))}
            </tr>
          ))}
        </tbody>
      </table>
    </div>
  );
}

function ScrollButton({ label, d, className = "" }: { label: string; d: string; className?: string }) {
  return (
    <IconButton label={label} className={`size-[25px] border border-[#ababab] bg-white ${className}`}>
      <Pix x={0} y={0} w={12} h={12}>
        <path d={d} fill="#6a6a6a" />
      </Pix>
    </IconButton>
  );
}

function VerticalScroll() {
  return (
    <div className="mt-px mr-[3px] ml-[2px] flex w-[25px] shrink-0 flex-col bg-[#dadada]">
      <ScrollButton label="向上滚动" d="M.5 9h11L6 3z" />
      <div className="h-[480px] border border-[#ababab] bg-white" />
      <ScrollButton label="向下滚动" d="M.5 3h11L6 9z" className="mt-auto" />
    </div>
  );
}

/* ---------- sheet tabs and status ---------- */

const SHEETS = ["Sheet2", "Sheet1", "Sheet3", "Sheet4", "Sheet5", "Sheet6", "Sheet7", "Sheet8"];

function SheetBar() {
  return (
    <div className="flex h-[33px] shrink-0 items-start border-b border-[#c6c6c6] text-[20px]">
      <div className="flex h-8 w-[115px] items-center gap-7 pl-[29px]">
        <button type="button" aria-label="上一张">
          <Pix x={0} y={0} w={6} h={10}><path d="M6 0v10L0 5z" fill="#c4c4c4" /></Pix>
        </button>
        <button type="button" aria-label="下一张">
          <Pix x={0} y={0} w={6} h={10}><path d="M0 0v10l6-5z" fill="#c4c4c4" /></Pix>
        </button>
      </div>
      {SHEETS.map((s) =>
        s === "Sheet8" ? (
          <button type="button" key={s} className="-mt-px h-[30px] w-[93px] border-r border-b-2 border-l border-r-[#ababab] border-b-[#217346] border-l-[#ababab] bg-white pb-[3px] leading-6 font-medium text-[#217346]">
            {s}
          </button>
        ) : (
          <button type="button" key={s} className="mt-[3px] h-[25px] w-[93px] border-l border-[#ababab] pb-[7px] leading-[18px] text-[#444]">
            {s}
          </button>
        ),
      )}
      <IconButton label="新工作表" className="ml-[36px] h-8">
        <Pix x={0} y={0} w={24} h={24}>
          <circle cx="12" cy="12" r="10.300" fill="none" stroke="#777" strokeWidth="1.200" />
          <path d="M12 7v10M7 12h10" stroke="#777" strokeWidth="1.800" />
        </Pix>
      </IconButton>
      <div className="ml-auto flex h-[31px] w-[34px] items-center justify-center pr-1"><Dots /></div>
      <div className="mt-[3px] mr-[29px] flex w-[724px] bg-[#dadada]">
        <ScrollButton label="向左滚动" d="M9 .5v11L3 6z" />
        <div className="w-[643px] border border-[#ababab] bg-white" />
        <ScrollButton label="向右滚动" d="M3 .5v11L9 6z" className="ml-auto" />
      </div>
    </div>
  );
}

function Stat({ name, value }: { name: string; value: string }) {
  return (
    <span className="whitespace-nowrap">
      {name}: <span className="text-[19px]">{value}</span>
    </span>
  );
}

function StatusBar() {
  return (
    <footer className="flex h-[33px] shrink-0 items-stretch border-b-2 border-[#ececec] bg-[#f3f3f3] text-[#262626]">
      <div className="flex flex-1 items-center justify-end gap-[22px] pr-[27px] leading-[30px]">
        <Stat name="平均值" value="1761.133333" />
        <Stat name="计数" value="105" />
        <Stat name="求和" value="184919" />
      </div>
      <IconButton label="普通" className="w-[60px] bg-[#c6c6c6]">
        <Pix x={0} y={0} w={20} h={20}>
          <path d="M.5 .5h19v19H.5zM.5 7h19M.5 13h19M7 .5v19M13 .5v19" fill="none" stroke="#666" strokeWidth="1.200" />
        </Pix>
      </IconButton>
      <IconButton label="页面布局视图" className="w-[60px]">
        <Pix x={0} y={0} w={20} h={20}>
          <path d="M.5 .5h19v19H.5zM4.500 3.500h11v13h-11zM7 7h6M7 10h6M7 13h6" fill="none" stroke="#666" strokeWidth="1.200" />
        </Pix>
      </IconButton>
      <IconButton label="分页预览" className="w-[60px]">
        <Pix x={0} y={0} w={20} h={20}>
          <path d="M.5 .5h19v19H.5zM.5 11.500h13v-11M7 .5v11" fill="none" stroke="#666" strokeWidth="1.200" />
        </Pix>
      </IconButton>
      <IconButton label="缩小" className="w-[28px]">
        <Pix x={0} y={0} w={12} h={12}><path d="M0 6h12" stroke="#444" strokeWidth="1.200" /></Pix>
      </IconButton>
      <input
        type="range"
        aria-label="缩放"
        min="0"
        max="100"
        defaultValue="50"
        className="w-[148px] appearance-none bg-transparent [&::-webkit-slider-runnable-track]:h-[2px] [&::-webkit-slider-runnable-track]:bg-[#ababab] [&::-webkit-slider-thumb]:-mt-[8px] [&::-webkit-slider-thumb]:h-[17px] [&::-webkit-slider-thumb]:w-2 [&::-webkit-slider-thumb]:appearance-none [&::-webkit-slider-thumb]:bg-[#6e6e6e]"
      />
      <IconButton label="放大" className="w-[28px]">
        <Pix x={0} y={0} w={12} h={12}><path d="M0 6h12M6 0v12" stroke="#444" strokeWidth="1.200" /></Pix>
      </IconButton>
      <button type="button" className="w-[70px] pr-[11px] text-right text-[19px]">100%</button>
    </footer>
  );
}

function Watermark() {
  return (
    <div className="pointer-events-none absolute right-[92px] bottom-[32px] opacity-80 drop-shadow-[0_0_1px_#666]">
      <Fine x={90} y={30} w={358} h={178}>
        <g fill="#fbfbfb">
          <text x="93" y="365" fontSize="236" fontWeight="700" stroke="#fbfbfb" strokeWidth="5" fontFamily="'Liberation Sans', sans-serif">Bai</text>
          <ellipse cx="495" cy="174" rx="39" ry="49" />
          <ellipse cx="568" cy="101" rx="35" ry="51" />
          <ellipse cx="660" cy="106" rx="38" ry="49" transform="rotate(10 660 106)" />
          <ellipse cx="717" cy="195" rx="38" ry="47" />
          <path d="M605 181Q632 181 650 210Q672 242 702 262Q734 286 733 318Q728 372 676 374Q640 374 605 366Q570 372 535 372Q482 366 479 314Q482 286 512 265Q540 242 558 212Q576 183 605 181z" />
          <text x="768" y="352" fontSize="174" fontWeight="900" fontFamily="'Noto Sans CJK SC', sans-serif">经验</text>
          <text x="110" y="500" fontSize="121" fontFamily="'Open Sans', sans-serif">jingyan.baidu.com</text>
        </g>
        <text x="512" y="344" fontSize="144" fontWeight="700" fill="#b4b4b4" fontFamily="'Liberation Sans', sans-serif">du</text>
      </Fine>
    </div>
  );
}

export default function App() {
  return (
    <div className="relative flex h-screen min-h-[600px] flex-col overflow-hidden bg-[#e6e6e6] text-[18px] [font-family:'Open_Sans','Noto_Sans_CJK_SC',sans-serif]">
      <div className="shrink-0 bg-[#217346]">
        <TitleBar />
        <MenuTabs />
      </div>
      <Ribbon />
      <FormulaBar />
      <main className="relative flex min-h-0 flex-1">
        <Grid />
        <VerticalScroll />
        <svg className="absolute -top-1 left-[640px]" width="13" height="16" viewBox="0 0 13 16" aria-hidden="true">
          <path d="M4 .5h5v8h3.500L6.500 15.500L.5 8.500H4z" fill="#000" stroke="#fff" />
        </svg>
      </main>
      <SheetBar />
      <StatusBar />
      <Watermark />
    </div>
  );
}
